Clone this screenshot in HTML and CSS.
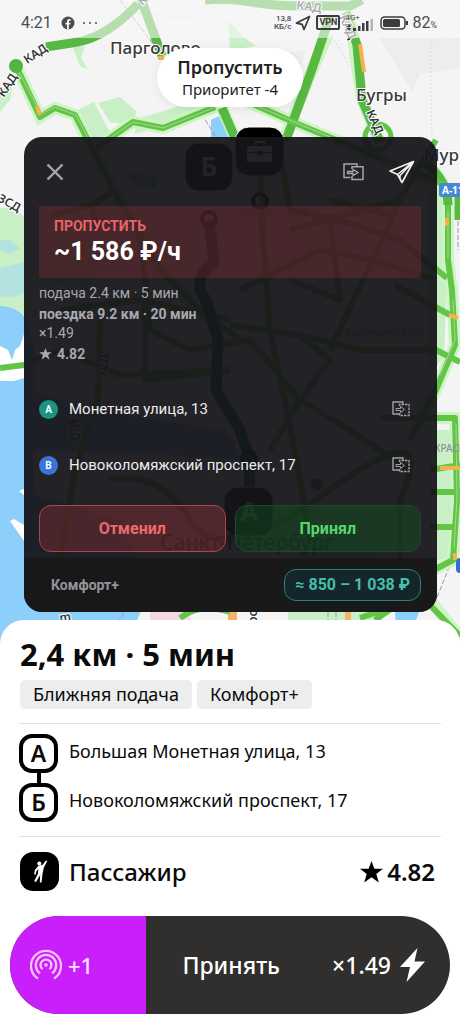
FILE: index.html
```
<!DOCTYPE html>
<html lang="ru">
<head>
    <meta charset="utf-8">
    <meta name="viewport" content="width=device-width, initial-scale=1">
    <title>Новый заказ</title>
    <link rel="stylesheet" href="styles.css">
</head>
<body>
<div class="screen">

    <!-- map -->
    <svg class="map" viewBox="0 0 460 660" preserveAspectRatio="xMidYMin slice" aria-hidden="true">
        <rect width="460" height="660" fill="#f5f4f4"/>
        <g class="park">
            <path d="M78 110l16-8 18 34-28 8zM98 103l22-6 16 14-2 14-24-3zM0 92l14-14-4 22-10 12zM73 48l12-2-4 12 7 11-8-3z"/>
            <path d="M140 118l40-12 34-2-30 18-50 12zM0 208q18-2 30 16v90H0zM428 195l14-8 6 60-4 110-16 20z"/>
            <path d="M436 430h18v130h-18zM228 20l14 16 14 10-26 4zM60 230l50 20-20 40-50-10zM280 560l60-30 40 20v80h-90z"/>
        </g>
        <path class="haze" d="M380 38h80v30l-40 6-8 18zM236 60l70-10-14 50-50-10z"/>
        <path fill="#b4e2de" d="M0 240l10 0 10 8-10 6-10-4zM0 268l24-6v30q-12 8-24 4z"/>
        <g class="water">
            <path d="M0 306q16 0 28 14l8 40-6 260-4 40H0zM24 390l70 20 130 20 20 30-90-6-130-4z"/>
            <path d="M211 120l12-6 6 24h-18zM125 176q20-6 34 4l-4 8q-18 0-30-12zM20 490l100 30 30 70-30 70H0zM395 610h25l-8 20h-16z"/>
        </g>
        <path fill="#fff" d="M0 346l8 4 4 10 3-10 5-4 4-12v44l-10 3H0zM19 491l5-2v6zM10 521l4-2 10 6v16z"/>
        <path fill="#f3d9e6" d="M150 612h40v12h-40z"/>
        <path fill="#f4b168" d="M228 612h9v10h-9zM345 612h6v10h-6z"/>

        <g class="bound">
            <path d="M120 0l60 80 60 95"/>
            <path d="M458 200v50M452 560l-20 50M105 640l20-28M328 612v10M336 612v10"/>
        </g>
        <g class="bound violet">
            <path d="M258 14l70 16 16 26 6 12M460 22l-30 24 2 90M120 0l20 14 50 4 40-18"/>
        </g>

        <!-- light casing under the roads -->
        <g class="casing">
            <path d="M16 66L40 117 55 108 75 115 92 148 122 205 160 270 200 310"/>
            <path d="M96 148L133 122 163 128 215 107M160 48L200 90 222 108 236 140"/>
            <path d="M328 34L310 75 290 125 280 150M350 18L362 100 380 142"/>
            <path d="M244 100L300 125 360 150 440 186"/>
            <path d="M424 162Q448 180 448 205V260L452 290 455 345 436 390 410 440"/>
            <path d="M436 418H455L457 500 453 560 430 572M430 600L462 640"/>
        </g>
        <g class="road wide">
            <path d="M138 4Q108 36 78 42L46 47"/>
            <path d="M140 -4L162 56M222 108L236 140M205 0Q230 -2 252 2T300 6T350 6L362 0M330 16L310 75 286 140M346 12L357 45 362 100 380 142"/>
            <path d="M424 162Q448 180 448 205M459 190V220"/>
        </g>
        <g class="road">
            <path d="M16 66L40 117 55 108 75 115 92 148 122 205 160 270 200 310 240 340"/>
            <path d="M96 148L133 122 163 128 215 107"/>
            <path d="M244 100L300 125 360 150 448 186M280 150L290 210 340 220 400 240 447 278"/>
            <path d="M448 205V260L452 290 455 345 436 390 410 440M330 200L390 215 436 140M330 350L396 210"/>
            <path d="M395 285L450 315M300 335L360 350 436 350 460 362M230 325L300 335 330 360 300 400 350 430 410 470"/>
            <path d="M436 418H455L457 500 453 560 430 572M380 418H436M430 470L460 465M430 492H460M430 527H456"/>
            <path d="M430 605L460 636M0 368L24 365 60 350 120 375 230 370M115 190L92 205 96 230M92 205L50 216"/>
            <path d="M100 320L98 400 75 470 60 560M145 290V380L230 370M230 320L140 300 60 310M260 140L262 225 270 330 285 400 300 480 310 540"/>
            <path d="M110 480Q160 470 190 520T330 490 400 500V560M290 230L400 200M290 280L340 300 330 220M180 618q20-16 50-6M360 618l40-14M375 620l20-14"/>
            <path d="M240 290L320 250 380 262 436 280M140 230L150 330 190 350 250 340 300 400 270 450"/>
        </g>
        <g class="lane">
            <path d="M18 70L41 114 55 107 76 115 92 146M100 145L133 122 163 128 213 108M252 104L330 137"/>
            <path d="M448 210V258M453 300L455 340 440 375M456 424L457 498 454 548"/>
        </g>
        <circle cx="16" cy="66" r="7" fill="#52b53d"/>
        <circle cx="378" cy="137" r="13" fill="none" stroke="#62c545" stroke-width="5"/>
        <path class="jam" d="M360 44L364 72M447 218V226M449 315L458 318M440 468H460M455 553V560M158 58h6M37 106l3 9"/>
        <path d="M209 220L214 262Q190 280 206 300L218 340 216 390 240 430 250 460 249 500" fill="none" stroke="#0e6b54" stroke-width="11" stroke-linejoin="round"/>
        <g fill="none" stroke="#111" stroke-width="4">
            <circle cx="209" cy="219" r="7"/>
            <circle cx="260" cy="201" r="7"/>
            <circle cx="249" cy="459" r="7"/>
        </g>

        <g class="place">
            <text x="110" y="54">Парголово</text>
            <text x="356" y="101">Бугры</text>
            <text x="424" y="161">Мурино</text>
            <text class="city" x="160" y="550">Санкт-Петербург</text>
        </g>
        <g class="road-name">
            <text transform="translate(27 64) rotate(-33)">КАД</text>
            <text transform="translate(4 98) rotate(-57)">КАД</text>
            <text transform="translate(142 6) rotate(-40)">КАД</text>
            <text transform="translate(296 9) rotate(8)">КАД</text>
            <text transform="translate(339 17) rotate(66)">КАД</text>
            <text transform="translate(366 112) rotate(66)">КАД</text>
            <text transform="translate(-3 201) rotate(28)">ЗСД</text>
            <text transform="translate(106 378) rotate(-85)">ЗСД</text>
            <text transform="translate(68 418) rotate(80)">ЗСД</text>
            <text class="district" x="345" y="337">КАЛИНИНСКИЙ</text>
            <text class="district" x="434" y="452">КРАСН</text>
            <text class="district" x="240" y="217">ВЫБОРГСКИЙ</text>
            <text class="district" x="150" y="448">ПЕТРОГРАДСКИЙ</text>
            <text transform="translate(60 622) rotate(-8)">m</text>
            <text transform="translate(257 624) rotate(-90)">рос</text>
        </g>
        <rect x="439" y="183" width="30" height="14" rx="3" fill="#4a86d8"/>
        <text x="442" y="194" class="badge">А-118</text>
        <rect x="456" y="558" width="14" height="15" rx="4" fill="#3470d0"/>
        <circle cx="317" cy="484" r="6" fill="#3470d0"/>

        <!-- pins -->
        <g class="pin">
            <rect x="185" y="143" width="48" height="48" rx="14"/>
            <rect x="235" y="127" width="49" height="49" rx="14"/>
            <rect x="224" y="487" width="49" height="49" rx="14"/>
            <text x="209" y="176">Б</text>
            <text x="249" y="521">А</text>
            <path d="M247 146h25v6h-10v-1h-5v1h-10zM247 153h10v2h5v-2h10v9h-25zM254 145v-4h11v4h-2v-2h-7v2z"/>
        </g>
    </svg>

    <header class="status">
        <span class="clock">4:21</span>
        <svg width="14" height="14" viewBox="0 0 14 14"><circle cx="7" cy="7" r="6.5" fill="#4c4c4e"/><path d="M6 13.4V8.6H4.4V6.7H6V5.5C6 3.8 7 3 8.3 3h1.3v1.8h-.9c-.6 0-.9.3-.9.9v1h1.7l-.3 1.9H7.8v4.8z" fill="#f4f4f4"/></svg>
        <span class="dots"><i></i><i></i><i></i></span>
        <span class="speed">13,8<br>КБ/с</span>
        <svg width="16" height="16" viewBox="0 0 16 16"><path d="M14.5 1.5L1.5 8l5.6 1.3L9 14.5z" fill="none" stroke="#3c3c3e" stroke-width="1.8" stroke-linejoin="round"/></svg>
        <span class="vpn">VPN</span>
        <span class="signal">
            <small>4G+</small>
            <svg width="29" height="18" viewBox="0 0 29 18"><path d="M2 13l2-3 2 3zM2 14l2 3 2-3zM8 14h3v3H8zM13 12h2.500v5H13zM17 9h2.500v8H17zM21 7h2.500v10H21z" fill="#3c3c3e"/><path d="M25.500 5H28v12h-2.500z" fill="#b5b5b5"/></svg>
        </span>
        <svg width="29" height="14" viewBox="0 0 29 14"><rect x="1" y="1" width="24" height="12" rx="3.500" fill="none" stroke="#3c3c3e" stroke-width="1.500"/><rect x="3" y="3" width="17" height="8" rx="1.500" fill="#3c3c3e"/><path d="M27 5v4" stroke="#3c3c3e" stroke-width="2"/></svg>
        <span class="percent">82<small>%</small></span>
    </header>

    <div class="bubble">
        <b>Пропустить</b>
        <span>Приоритет -4</span>
    </div>

    <section class="card">
        <div class="card-top">
            <button class="icon-btn" type="button" aria-label="Закрыть">
                <svg width="18" height="18" viewBox="0 0 18 18"><path d="M1.500 1.500l15 15M16.500 1.500l-15 15" stroke="#a6a6ac" stroke-width="2.400"/></svg>
            </button>
            <button class="icon-btn copy" type="button" aria-label="Копировать">
                <svg width="21" height="18" viewBox="0 0 21 18"><path d="M7.500 14.500H1V1h13v2.500M9 6V3.800h11v12.700H9V13" fill="none" stroke="#a6a6aa" stroke-width="1.500"/><path d="M4.500 8.500H10v-2l5 3-5 3v-2H4.500z" fill="none" stroke="#a6a6aa" stroke-width="1.300"/></svg>
            </button>
            <button class="icon-btn" type="button" aria-label="Маршрут">
                <svg width="26" height="24" viewBox="0 0 26 24"><path d="M24.500 1.500L1 11l7.500 3.500L13 22.500zM24.500 1.500l-16 13M24.500 1.500L11 15.500v4" fill="none" stroke="#f2f2f2" stroke-width="1.600" stroke-linejoin="round"/></svg>
            </button>
        </div>

        <div class="rate">
            <span>ПРОПУСТИТЬ</span>
            <strong>~1 586 ₽/ч</strong>
        </div>

        <div class="details">
            <p>подача 2.4 км · 5 мин</p>
            <p class="bold">поездка 9.2 км · 20 мин</p>
            <p class="factor">×1.49</p>
            <p class="bold"><svg width="13" height="12" viewBox="0 0 24 23"><path d="M12 0l3 8h9l-7 5.500 2.600 9L12 17l-7.600 5.500 2.600-9L0 8h9z" fill="#a9a9ad"/></svg> 4.82</p>
        </div>

        <div class="stop">
            <span class="dot green">A</span>
            <span class="address">Монетная улица, 13</span>
            <button class="icon-btn" type="button" aria-label="Копировать адрес">
                <svg width="18" height="16" viewBox="0 0 18 16"><path d="M7 13H1V1h10v2" fill="none" stroke="#a0a0a4" stroke-width="1.400"/><path d="M7.500 5V3.500H17v11H7.500V11" fill="none" stroke="#a0a0a4" stroke-width="1.400" stroke-dasharray="2.500 1"/><path d="M4 7.500h4.500v-2l4 3-4 3v-2H4z" fill="none" stroke="#a0a0a4"/></svg>
            </button>
        </div>
        <div class="stop">
            <span class="dot blue">B</span>
            <span class="address">Новоколомяжский проспект, 17</span>
            <button class="icon-btn" type="button" aria-label="Копировать адрес">
                <svg width="18" height="16" viewBox="0 0 18 16"><path d="M7 13H1V1h10v2" fill="none" stroke="#a0a0a4" stroke-width="1.400"/><path d="M7.500 5V3.500H17v11H7.500V11" fill="none" stroke="#a0a0a4" stroke-width="1.400" stroke-dasharray="2.500 1"/><path d="M4 7.500h4.500v-2l4 3-4 3v-2H4z" fill="none" stroke="#a0a0a4"/></svg>
            </button>
        </div>

        <div class="actions">
            <button class="cancel" type="button">Отменил</button>
            <button class="accept" type="button">Принял</button>
        </div>

        <div class="card-footer">
            <span>Комфорт+</span>
            <span class="price">≈ 850 – 1 038 ₽</span>
        </div>
    </section>

    <main class="sheet">
        <h1>2,4 км · 5 мин</h1>
        <div class="tags">
            <span>Ближняя подача</span>
            <span>Комфорт+</span>
        </div>

        <ul class="route">
            <li><span class="letter">А</span><span class="street">Большая Монетная улица, 13</span></li>
            <li><span class="letter">Б</span><span class="street">Новоколомяжский проспект, 17</span></li>
        </ul>

        <div class="passenger">
            <svg width="39" height="39" viewBox="0 0 39 39">
                <rect width="39" height="39" rx="13"/>
                <circle cx="19.300" cy="11.500" r="2" fill="#fff"/>
                <path d="M26 8.500l1.300.6-3.500 6.600-1.300 6.300L21.500 30.500h-1.700l.4-7.500-4.200 7-1.800-.8 3.600-7.200.6-5-2 2.200-.8 3.600-1.400-.2.700-4.500 3.500-4.300 4.200-1z" fill="#fff"/>
            </svg>
            <span>Пассажир</span>
            <span class="rating"><svg width="23" height="22" viewBox="0 0 24 23"><path d="M12 0l3 8h9l-7 5.500 2.600 9L12 17l-7.600 5.500 2.600-9L0 8h9z"/></svg>4.82</span>
        </div>

        <button class="take" type="button">
            <span class="bonus">
                <svg width="32" height="32" viewBox="0 0 32 32" fill="none" stroke="#ffc4ff" stroke-width="2.300"><path d="M8 29.600A15 15 0 1 1 24 29.600M10 24.400A10.200 10.200 0 1 1 22 24.400M12.600 20.200A5.400 5.400 0 1 1 19.400 20.200"/><circle cx="16" cy="16" r="1.800" fill="#ffc4ff" stroke="none"/></svg>
                +1
            </span>
            <span class="take-text">Принять</span>
            <span class="surge">×1.49
                <svg width="25" height="34" viewBox="0 0 25 34"><path d="M17.500 0L0 19h10L6.500 34 25 13.500H14.500z" fill="#fff"/></svg>
            </span>
        </button>
    </main>
</div>
</body>
</html>
```

FILE: styles.css
```
* {
    box-sizing: border-box;
}

body {
    margin: 0;
    font-family: "Noto Sans", "Open Sans", sans-serif;
    color: #0b0b0b;
    background-color: #fff;
}

button {
    font: inherit;
    border: none;
    padding: 0;
    cursor: pointer;
}

p, h1, ul {
    margin: 0;
    padding: 0;
}

svg {
    display: block;
    flex: none;
}

.screen {
    position: relative;
    min-height: 100vh;
    display: flex;
    flex-direction: column;
}

/* map */
.map {
    position: absolute;
    top: 0;
    left: 0;
    width: 100%;
    height: 660px;
    z-index: -1;
}

.park { fill: #c8efc6; }
.water { fill: #8ccffa; }
.haze { fill: #eeecec; }

.bound {
    fill: none;
    stroke: #9a9aa4;
    stroke-width: 1;
    stroke-dasharray: 5 2;
}

.violet {
    stroke: #c3bdf0;
    stroke-dasharray: 1 3;
}

.casing {
    fill: none;
    stroke: #cdf5c4;
    stroke-width: 12;
}

.road {
    fill: none;
    stroke: #62c545;
    stroke-width: 6;
    stroke-linejoin: round;
}

.wide {
    stroke: #58b942;
    stroke-width: 9;
}

.lane {
    fill: none;
    stroke: #a8d49c;
    stroke-width: 1;
}

.jam {
    fill: none;
    stroke: #f6b04c;
    stroke-width: 4;
}

.place {
    font-size: 17px;
    font-weight: 500;
    fill: #38383c;
    stroke: #fff;
    stroke-width: 2;
    paint-order: stroke;
}

.place .city {
    font-size: 21px;
    stroke: none;
}

.road-name {
    font-size: 12px;
    font-weight: 600;
    fill: #333a3c;
    stroke: #fff;
    stroke-width: 2;
    paint-order: stroke;
}

.road-name .district {
    font-size: 10px;
    font-weight: 500;
    fill: #8a8f9c;
    stroke: none;
}

.badge {
    font-size: 10px;
    font-weight: 700;
    fill: #fff;
}

.pin rect {
    fill: #000;
    stroke: #fff;
    stroke-width: 1;
}

.pin text {
    font-size: 26px;
    font-weight: 700;
    text-anchor: middle;
}

.pin text, .pin path {
    fill: #fff;
}

/* status bar */
.status {
    height: 38px;
    padding: 7px 23px 0 21px;
    display: flex;
    align-items: center;
    background-color: rgba(247, 247, 247, 0.6);
    font-family: Roboto, sans-serif;
    color: #4c4c4e;
}

.clock {
    font-size: 16px;
    margin-right: 9px;
}

.dots {
    display: flex;
    gap: 4px;
    margin-left: 8px;
}

.dots i {
    width: 2px;
    height: 2px;
    border-radius: 50%;
    background-color: #4c4c4e;
}

.speed {
    margin-left: auto;
    margin-right: 4px;
    font-size: 8px;
    line-height: 8px;
    font-weight: 500;
    text-align: right;
}

.vpn {
    margin: 0 5px;
    padding: 0 1px;
    border: 2px solid #3c3c3e;
    border-radius: 2px;
    font-size: 9px;
    line-height: 11px;
    font-weight: 700;
    color: #3c3c3e;
}

.signal {
    position: relative;
    margin-right: 6px;
}

.signal small {
    position: absolute;
    top: 0;
    left: 0;
    font-size: 8px;
    line-height: 8px;
}

.percent {
    margin-left: 3px;
    font-size: 16px;
}

.percent small {
    font-size: 9px;
}

.bubble {
    align-self: center;
    margin-top: 10px;
    height: 59px;
    padding: 8px 20px;
    border-radius: 30px;
    background-color: #fff;
    box-shadow: 0 2px 8px rgba(0, 0, 0, 0.08);
    display: flex;
    flex-direction: column;
    align-items: center;
    font-size: 15px;
    line-height: 20px;
    color: #222;
}

.bubble b {
    font-size: 18px;
    line-height: 23px;
    font-weight: 600;
}

/* dark card over the map */
.card {
    margin: 30px 23px 8px 24px;
    border-radius: 18px;
    background-color: rgba(21, 20, 24, 0.94);
    font-family: Roboto, sans-serif;
    color: #a9a9ad;
    overflow: hidden;
}

.icon-btn {
    background: none;
}

.card-top {
    height: 69px;
    padding: 0 22px;
    display: flex;
    align-items: center;
}

.copy {
    margin-left: auto;
    margin-right: 25px;
}

.rate {
    margin: 0 16px 0 15px;
    height: 72px;
    padding: 11px 15px;
    background-color: rgba(239, 60, 70, 0.18);
}

.rate span {
    display: block;
    font-size: 14px;
    line-height: 18px;
    font-weight: 700;
    color: #e96468;
}

.rate strong {
    display: block;
    font-size: 25px;
    line-height: 34px;
    font-weight: 700;
    color: #fff;
}

.details {
    padding: 5px 15px 16px;
    font-size: 14px;
    line-height: 20px;
}

.details .bold {
    display: flex;
    align-items: center;
    gap: 5px;
    height: 22px;
    font-weight: 700;
}

.details .factor {
    height: 18px;
    line-height: 16px;
}

.stop {
    height: 56px;
    padding: 0 27px 0 15px;
    display: flex;
    align-items: center;
    gap: 11px;
}

.dot {
    width: 19px;
    height: 19px;
    border-radius: 50%;
    font-size: 10px;
    line-height: 19px;
    font-weight: 700;
    text-align: center;
    color: #fff;
}

.green { background-color: #1b9481; }
.blue { background-color: #3a74d8; }

.address {
    flex: 1;
    font-size: 15px;
    color: #ececee;
}

.actions {
    padding: 12px 16px 6px 15px;
    display: grid;
    grid-template-columns: 1fr 1fr;
    gap: 9px;
}

.actions button {
    height: 47px;
    border-radius: 12px;
    font-size: 16px;
    font-weight: 700;
}

.cancel {
    border: 1px solid #a8484c;
    background-color: rgba(239, 60, 70, 0.22);
    color: #ee6a6c;
}

.accept {
    border: 1px solid #1c4a28;
    background-color: rgba(10, 110, 30, 0.3);
    color: #55d66f;
}

.card-footer {
    height: 54px;
    padding: 0 16px 0 27px;
    display: flex;
    align-items: center;
    justify-content: space-between;
    background-color: rgba(23, 23, 25, 0.85);
    font-size: 14px;
    font-weight: 700;
    color: #96969a;
}

.price {
    height: 32px;
    padding: 0 10px;
    border: 1px solid #2c8278;
    border-radius: 12px;
    background-color: #14262a;
    font-size: 16px;
    line-height: 30px;
    color: #45bfae;
}

/* order sheet */
.sheet {
    flex: 1;
    padding: 14px 10px 10px;
    border-radius: 24px 24px 0 0;
    background-color: #fff;
}

h1 {
    margin-left: 10px;
    font-size: 31px;
    line-height: 40px;
    font-weight: 700;
}

.tags {
    margin: 6px 10px 14px;
    display: flex;
    gap: 5px;
}

.tags span {
    height: 29px;
    padding: 0 13px;
    border-radius: 5px;
    background-color: #ededed;
    font-size: 18px;
    line-height: 28px;
}

.route {
    margin: 0 9px;
    padding: 10px 0 14px;
    border-top: 1px solid #e2e2e2;
    border-bottom: 1px solid #e2e2e2;
    list-style: none;
}

.route li {
    display: flex;
    gap: 11px;
    height: 39px;
    font-size: 18px;
}

.route li + li {
    margin-top: 10px;
}

.street {
    line-height: 34px;
}

.letter {
    position: relative;
    width: 39px;
    height: 39px;
    border: 4px solid #000;
    border-radius: 13px;
    font-size: 23px;
    line-height: 30px;
    font-weight: 600;
    text-align: center;
}

/* link between the two stops */
.route li:first-child .letter::after {
    content: "";
    position: absolute;
    top: 100%;
    left: 50%;
    width: 4px;
    height: 18px;
    margin-left: -2px;
    background-color: #000;
}

.passenger {
    margin: 15px 15px 25px 10px;
    display: flex;
    align-items: center;
    gap: 10px;
    font-size: 24px;
    line-height: 39px;
    font-weight: 500;
}

.rating {
    margin-left: auto;
    display: flex;
    align-items: center;
    gap: 4px;
    font-weight: 600;
}

.take {
    width: 100%;
    height: 98px;
    border-radius: 49px;
    overflow: hidden;
    display: flex;
    align-items: center;
    background-color: #312f2e;
    color: #fff;
    font-size: 23px;
    font-weight: 500;
}

.bonus {
    width: 31%;
    height: 100%;
    padding-left: 20px;
    display: flex;
    align-items: center;
    gap: 6px;
    background-color: #c81ffb;
    color: #ffe4ff;
    font-size: 22px;
}

.take-text {
    margin-left: 36px;
}

.surge {
    margin-left: auto;
    padding-right: 25px;
    display: flex;
    align-items: center;
    gap: 9px;
}
```
